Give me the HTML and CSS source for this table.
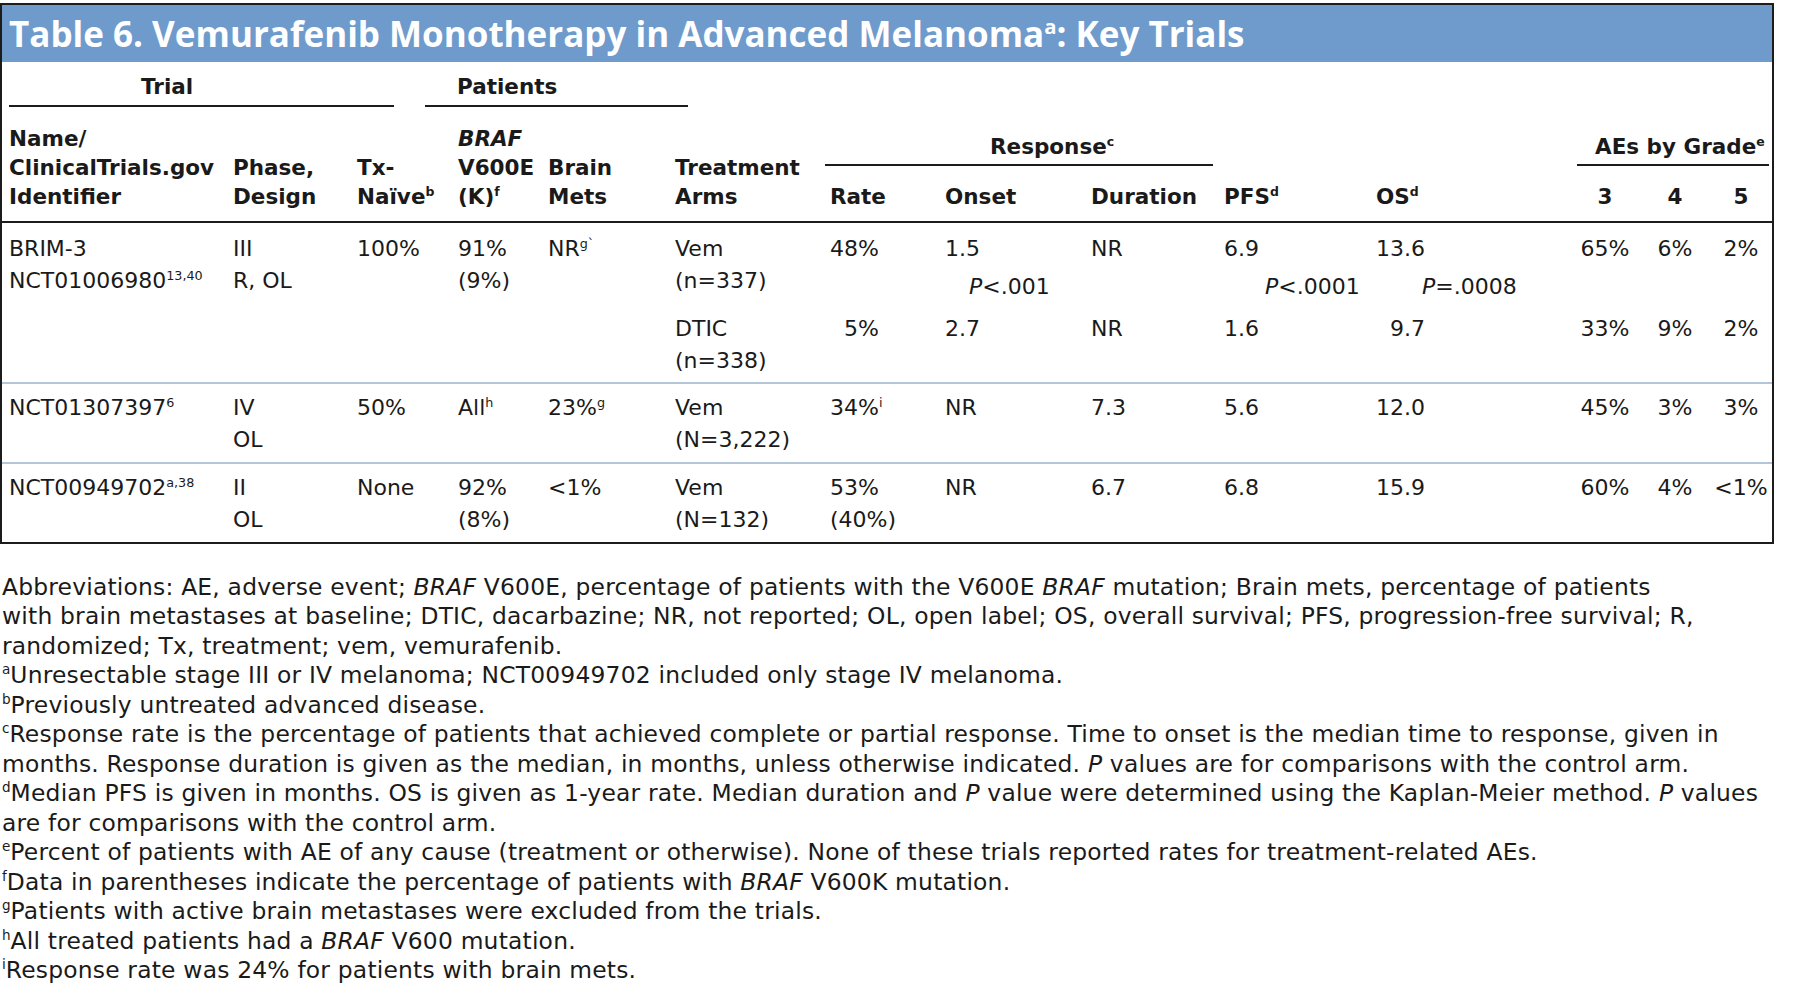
FILE: index.html
```html
<!DOCTYPE html>
<html lang="en">
<head>
<meta charset="utf-8">
<title>Table 6. Vemurafenib Monotherapy in Advanced Melanoma</title>
<link rel="stylesheet" href="styles.css">
</head>
<body>
<div class="page">
  <div class="table-box">
    <div class="title-bar">Table 6. Vemurafenib Monotherapy in Advanced Melanoma<sup>a</sup>: Key Trials</div>
    <div class="groups">
      <div class="group group-trial">Trial</div>
      <div class="group group-patients">Patients</div>
    </div>
    <table class="trials">
      <colgroup>
        <col class="c-name">
        <col class="c-phase">
        <col class="c-tx">
        <col class="c-braf">
        <col class="c-brain">
        <col class="c-arm">
        <col class="c-rate">
        <col class="c-onset">
        <col class="c-dur">
        <col class="c-pfs">
        <col class="c-os">
        <col class="c-g3">
        <col class="c-g4">
        <col class="c-g5">
      </colgroup>
      <thead>
        <tr class="hrow-a">
          <th rowspan="2" class="multi first">Name/<br>ClinicalTrials.gov<br>Identifier</th>
          <th rowspan="2" class="multi">Phase,<br>Design</th>
          <th rowspan="2" class="multi">Tx-<br>Naïve<sup>b</sup></th>
          <th rowspan="2" class="multi"><i>BRAF</i><br>V600E<br>(K)<sup>f</sup></th>
          <th rowspan="2" class="multi">Brain<br>Mets</th>
          <th rowspan="2" class="multi">Treatment<br>Arms</th>
          <th colspan="3" class="span-head"><div class="span-label resp">Response<sup>c</sup></div></th>
          <th rowspan="2" class="multi">PFS<sup>d</sup></th>
          <th rowspan="2" class="multi">OS<sup>d</sup></th>
          <th colspan="3" class="span-head"><div class="span-label aes">AEs by Grade<sup>e</sup></div></th>
        </tr>
        <tr class="hrow-b">
          <th>Rate</th>
          <th>Onset</th>
          <th>Duration</th>
          <th class="ctr">3</th>
          <th class="ctr">4</th>
          <th class="ctr">5</th>
        </tr>
      </thead>
      <tbody>
        <tr class="r1a">
          <td rowspan="2" class="first">BRIM-3<br>NCT01006980<sup>13,40</sup></td>
          <td rowspan="2">III<br>R, OL</td>
          <td rowspan="2">100%</td>
          <td rowspan="2">91%<br>(9%)</td>
          <td rowspan="2">NR<sup>g`</sup></td>
          <td>Vem<br>(n=337)</td>
          <td>48%</td>
          <td>1.5<span class="pv pv-onset"><i>P</i>&lt;.001</span></td>
          <td>NR</td>
          <td>6.9<span class="pv pv-pfs"><i>P</i>&lt;.0001</span></td>
          <td>13.6<span class="pv pv-os"><i>P</i>=.0008</span></td>
          <td class="ctr">65%</td>
          <td class="ctr">6%</td>
          <td class="ctr">2%</td>
        </tr>
        <tr class="r1b">
          <td>DTIC<br>(n=338)</td>
          <td><span class="fig">5%</span></td>
          <td>2.7</td>
          <td>NR</td>
          <td>1.6</td>
          <td><span class="fig">9.7</span></td>
          <td class="ctr">33%</td>
          <td class="ctr">9%</td>
          <td class="ctr">2%</td>
        </tr>
        <tr class="rn">
          <td class="first">NCT01307397<sup>6</sup></td>
          <td>IV<br>OL</td>
          <td>50%</td>
          <td>All<sup>h</sup></td>
          <td>23%<sup>g</sup></td>
          <td>Vem<br>(N=3,222)</td>
          <td>34%<sup>i</sup></td>
          <td>NR</td>
          <td>7.3</td>
          <td>5.6</td>
          <td>12.0</td>
          <td class="ctr">45%</td>
          <td class="ctr">3%</td>
          <td class="ctr">3%</td>
        </tr>
        <tr class="rn">
          <td class="first">NCT00949702<sup>a,38</sup></td>
          <td>II<br>OL</td>
          <td>None</td>
          <td>92%<br>(8%)</td>
          <td>&lt;1%</td>
          <td>Vem<br>(N=132)</td>
          <td>53%<br>(40%)</td>
          <td>NR</td>
          <td>6.7</td>
          <td>6.8</td>
          <td>15.9</td>
          <td class="ctr">60%</td>
          <td class="ctr">4%</td>
          <td class="ctr">&lt;1%</td>
        </tr>
      </tbody>
    </table>
  </div>

  <div class="notes">
    <p>Abbreviations: AE, adverse event; <i>BRAF</i> V600E, percentage of patients with the V600E <i>BRAF</i> mutation; Brain mets, percentage of patients<br>with brain metastases at baseline; DTIC, dacarbazine; NR, not reported; OL, open label; OS, overall survival; PFS, progression-free survival; R,<br>randomized; Tx, treatment; vem, vemurafenib.</p>
    <p><sup>a</sup>Unresectable stage III or IV melanoma; NCT00949702 included only stage IV melanoma.</p>
    <p><sup>b</sup>Previously untreated advanced disease.</p>
    <p><sup>c</sup>Response rate is the percentage of patients that achieved complete or partial response. Time to onset is the median time to response, given in<br>months. Response duration is given as the median, in months, unless otherwise indicated. <i>P</i> values are for comparisons with the control arm.</p>
    <p><sup>d</sup>Median PFS is given in months. OS is given as 1-year rate. Median duration and <i>P</i> value were determined using the Kaplan-Meier method. <i>P</i> values<br>are for comparisons with the control arm.</p>
    <p><sup>e</sup>Percent of patients with AE of any cause (treatment or otherwise). None of these trials reported rates for treatment-related AEs.</p>
    <p><sup>f</sup>Data in parentheses indicate the percentage of patients with <i>BRAF</i> V600K mutation.</p>
    <p><sup>g</sup>Patients with active brain metastases were excluded from the trials.</p>
    <p><sup>h</sup>All treated patients had a <i>BRAF</i> V600 mutation.</p>
    <p><sup>i</sup>Response rate was 24% for patients with brain mets.</p>
  </div>
</div>
</body>
</html>
```

FILE: styles.css
```css
* {
  box-sizing: border-box;
}

html,
body {
  margin: 0;
  padding: 0;
  background: #ffffff;
}

body {
  font-family: "DejaVu Sans", "Open Sans", "Noto Sans", sans-serif;
  font-size: 22px;
  color: #1a1a1a;
}

sup {
  font-size: 0.58em;
  line-height: 0;
  vertical-align: 0.66em;
  letter-spacing: 0;
}

.page {
  padding-top: 3px;
}

.table-box {
  width: 1774px;
  border: 2px solid #1c1c1c;
}

.title-bar {
  height: 57px;
  line-height: 57px;
  padding-left: 7px;
  background: #6e9bcc;
  color: #ffffff;
  font-family: "Open Sans", "Noto Sans", "DejaVu Sans", sans-serif;
  font-size: 35px;
  font-weight: 700;
  white-space: nowrap;
}

.groups {
  display: flex;
  align-items: flex-start;
  height: 60px;
  padding-top: 9.5px;
}

.group {
  font-size: 21.5px;
  font-weight: 700;
  line-height: 29px;
  padding-bottom: 4.5px;
  border-bottom: 2px solid #1c1c1c;
}

.group-trial {
  margin-left: 7px;
  width: 385px;
  padding-left: 132px;
}

.group-patients {
  margin-left: 31px;
  width: 263px;
  padding-left: 32px;
}

.trials {
  width: 1770px;
  table-layout: fixed;
  border-collapse: separate;
  border-spacing: 0;
}

.c-name { width: 231px; }
.c-phase { width: 124px; }
.c-tx { width: 101px; }
.c-braf { width: 90px; }
.c-brain { width: 127px; }
.c-arm { width: 155px; }
.c-rate { width: 115px; }
.c-onset { width: 146px; }
.c-dur { width: 133px; }
.c-pfs { width: 152px; }
.c-os { width: 194px; }
.c-g3 { width: 70px; }
.c-g4 { width: 70px; }
.c-g5 { width: 62px; }

.trials th,
.trials td {
  padding: 0;
  text-align: left;
  vertical-align: top;
  white-space: nowrap;
}

.trials .first {
  padding-left: 7px;
}

.trials .ctr {
  text-align: center;
}

.trials th {
  font-size: 21.5px;
  font-weight: 700;
  line-height: 29px;
}

.trials th.multi {
  vertical-align: bottom;
  padding-bottom: 10.5px;
  border-bottom: 2px solid #1c1c1c;
}

.hrow-a .span-head {
  padding-top: 9.5px;
}

.span-label {
  line-height: 29px;
  padding-bottom: 3.5px;
  border-bottom: 2px solid #1c1c1c;
}

.resp {
  margin: 0 11px 0 -5px;
  padding-left: 165px;
}

.aes {
  margin: 0 3px 0 7px;
  padding-left: 18px;
}

.hrow-b th {
  padding-top: 15.5px;
  padding-bottom: 10.5px;
  border-bottom: 2px solid #1c1c1c;
}

.trials td {
  font-size: 22px;
  line-height: 32px;
}

.r1a td {
  padding-top: 9.5px;
  padding-bottom: 9.5px;
}

.r1b td {
  padding-top: 0.5px;
  padding-bottom: 5.5px;
}

.rn td {
  padding-top: 7.5px;
  padding-bottom: 6.5px;
  border-top: 2px solid #b4c5d9;
}

.pv {
  display: block;
  margin-top: 6px;
}

.pv-onset { padding-left: 24px; }
.pv-pfs { padding-left: 41px; }
.pv-os { padding-left: 46px; }

.fig {
  padding-left: 14px;
}

.notes {
  margin-top: 28.5px;
  padding-left: 2px;
  font-size: 23.4px;
  letter-spacing: 0.2px;
  line-height: 29.5px;
  white-space: nowrap;
}

.notes p {
  margin: 0;
}
```
